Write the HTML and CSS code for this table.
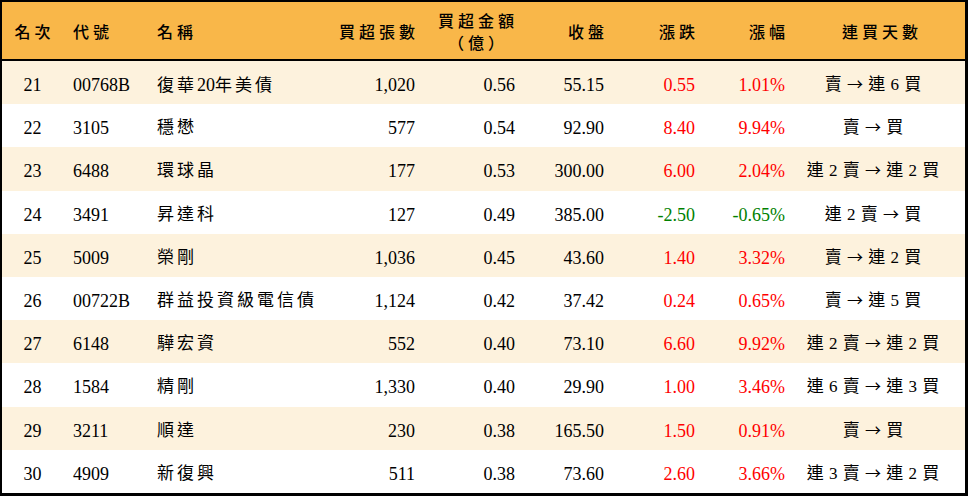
FILE: index.html
```html
<!DOCTYPE html>
<html lang="zh-Hant">
<head>
<meta charset="utf-8">
<link rel="stylesheet" href="styles.css">
</head>
<body>
<table class="rank-table">
  <colgroup>
    <col class="c-rank"><col class="c-code"><col class="c-name"><col class="c-vol"><col class="c-amt"><col class="c-close"><col class="c-chg"><col class="c-pct"><col class="c-days">
  </colgroup>
  <thead>
    <tr>
      <th class="center">名次</th>
      <th class="left">代號</th>
      <th class="left">名稱</th>
      <th class="right">買超張數</th>
      <th class="right two-line">買超金額<br><span class="unit">（億）</span></th>
      <th class="right">收盤</th>
      <th class="right">漲跌</th>
      <th class="right">漲幅</th>
      <th class="center">連買天數</th>
    </tr>
  </thead>
  <tbody>
    <tr><td class="center">21</td><td class="left">00768B</td><td class="left cjk">復華<span class="num">20</span>年美債</td><td class="right">1,020</td><td class="right">0.56</td><td class="right">55.15</td><td class="right up">0.55</td><td class="right up">1.01%</td><td class="center days">賣 <span class="arr">→</span> 連 6 買</td></tr>
    <tr><td class="center">22</td><td class="left">3105</td><td class="left cjk">穩懋</td><td class="right">577</td><td class="right">0.54</td><td class="right">92.90</td><td class="right up">8.40</td><td class="right up">9.94%</td><td class="center days">賣 <span class="arr">→</span> 買</td></tr>
    <tr><td class="center">23</td><td class="left">6488</td><td class="left cjk">環球晶</td><td class="right">177</td><td class="right">0.53</td><td class="right">300.00</td><td class="right up">6.00</td><td class="right up">2.04%</td><td class="center days">連 2 賣 <span class="arr">→</span> 連 2 買</td></tr>
    <tr><td class="center">24</td><td class="left">3491</td><td class="left cjk">昇達科</td><td class="right">127</td><td class="right">0.49</td><td class="right">385.00</td><td class="right down">-2.50</td><td class="right down">-0.65%</td><td class="center days">連 2 賣 <span class="arr">→</span> 買</td></tr>
    <tr><td class="center">25</td><td class="left">5009</td><td class="left cjk">榮剛</td><td class="right">1,036</td><td class="right">0.45</td><td class="right">43.60</td><td class="right up">1.40</td><td class="right up">3.32%</td><td class="center days">賣 <span class="arr">→</span> 連 2 買</td></tr>
    <tr><td class="center">26</td><td class="left">00722B</td><td class="left cjk">群益投資級電信債</td><td class="right">1,124</td><td class="right">0.42</td><td class="right">37.42</td><td class="right up">0.24</td><td class="right up">0.65%</td><td class="center days">賣 <span class="arr">→</span> 連 5 買</td></tr>
    <tr><td class="center">27</td><td class="left">6148</td><td class="left cjk">驊宏資</td><td class="right">552</td><td class="right">0.40</td><td class="right">73.10</td><td class="right up">6.60</td><td class="right up">9.92%</td><td class="center days">連 2 賣 <span class="arr">→</span> 連 2 買</td></tr>
    <tr><td class="center">28</td><td class="left">1584</td><td class="left cjk">精剛</td><td class="right">1,330</td><td class="right">0.40</td><td class="right">29.90</td><td class="right up">1.00</td><td class="right up">3.46%</td><td class="center days">連 6 賣 <span class="arr">→</span> 連 3 買</td></tr>
    <tr><td class="center">29</td><td class="left">3211</td><td class="left cjk">順達</td><td class="right">230</td><td class="right">0.38</td><td class="right">165.50</td><td class="right up">1.50</td><td class="right up">0.91%</td><td class="center days">賣 <span class="arr">→</span> 買</td></tr>
    <tr><td class="center">30</td><td class="left">4909</td><td class="left cjk">新復興</td><td class="right">511</td><td class="right">0.38</td><td class="right">73.60</td><td class="right up">2.60</td><td class="right up">3.66%</td><td class="center days">連 3 賣 <span class="arr">→</span> 連 2 買</td></tr>
  </tbody>
</table>
</body>
</html>
```

FILE: styles.css
```css
html, body {
  margin: 0;
  padding: 0;
  background: #ffffff;
}

.rank-table {
  width: 968px;
  height: 496px;
  box-sizing: border-box;
  border-collapse: separate;
  border-spacing: 0;
  border-style: solid;
  border-color: #000;
  border-width: 2px 3px 3px 2px;
  table-layout: fixed;
  font-family: "Liberation Serif", "Noto Sans CJK TC", serif;
  font-size: 18px;
  color: #000;
}

.c-rank { width: 61px; }
.c-code { width: 84px; }
.c-name { width: 183px; }
.c-vol { width: 95px; }
.c-amt { width: 100px; }
.c-close { width: 89px; }
.c-chg { width: 91px; }
.c-pct { width: 90px; }
.c-days { width: 170px; }

.rank-table th {
  height: 59px;
  box-sizing: border-box;
  background: #f9b749;
  border-bottom: 2px solid #000;
  font-family: "Noto Sans CJK TC", sans-serif;
  font-weight: 500;
  font-size: 16px;
  letter-spacing: 4px;
  line-height: 22px;
  padding: 0 10px;
  vertical-align: middle;
  white-space: nowrap;
}

.rank-table th.right { padding-left: 0; padding-right: 6px; }
.rank-table th.two-line { text-align: center; padding-left: 12px; padding-right: 6px; }
.rank-table th.center { padding-left: 4px; padding-right: 0; }

.rank-table td {
  height: 43px;
  box-sizing: border-box;
  padding: 5px 10px 0;
  line-height: 22px;
  white-space: nowrap;
  vertical-align: middle;
}

.rank-table tbody tr:nth-child(odd) td { background: #fdf2dd; }

.left { text-align: left; }
.right { text-align: right; }
.center { text-align: center; }

.cjk {
  font-family: "Liberation Serif", "Noto Sans CJK TC", serif;
  font-size: 17px;
  letter-spacing: 3px;
}

.cjk .num {
  font-size: 18px;
  letter-spacing: 0;
}

.rank-table td.days {
  font-size: 17px;
  letter-spacing: 0;
  word-spacing: 1px;
  padding-left: 0;
  padding-right: 14px;
}

.days .arr {
  font-family: "Noto Sans CJK TC", sans-serif;
  font-size: 16px;
  line-height: 16px;
}

.up { color: #ff0000; }
.down { color: #008000; }
```
